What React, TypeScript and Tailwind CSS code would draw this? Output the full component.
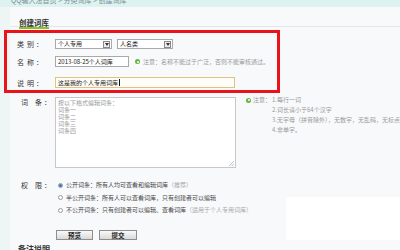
import React from 'react';

const font = { fontFamily: '"Noto Sans CJK SC", "Noto Sans", sans-serif' };

function Label({ a, b, wide }: { a: string; b: string; wide?: boolean }) {
  return (
    <div className={`flex items-center shrink-0 w-[45px] text-[7px] leading-[8px] text-[#333] ${wide ? 'pl-[11px]' : 'pl-[7px]'}`}>
      <span>{a}</span>
      <span className={wide ? 'ml-[7px]' : 'ml-[3px]'}>{b}</span>
      <span className="ml-[2px]">：</span>
    </div>
  );
}

function Select({ value, w }: { value: string; w: string }) {
  return (
    <div className={`${w} h-[10px] bg-white border border-[#a9a9a9] flex items-center justify-between pl-[2px] pr-[1px]`}>
      <span className="text-[6px] leading-[8px] text-[#222]">{value}</span>
      <span className="w-[7px] h-[7px] border border-[#888] bg-[#eee] flex items-center justify-center">
        <svg width="4" height="3" viewBox="0 0 4 3"><path d="M0 0h4L2 3z" fill="#333" /></svg>
      </span>
    </div>
  );
}

function Tip() {
  return (
    <span className="w-[5px] h-[5px] rounded-full bg-[#67b346] flex items-center justify-center shrink-0">
      <span className="w-[2px] h-[2px] rounded-full bg-white" />
    </span>
  );
}

function Radio({ checked, title, desc, extra }: { checked?: boolean; title: string; desc: string; extra?: string }) {
  return (
    <div className="flex items-center h-[12.5px] text-[6px] leading-[8px]">
      <span className="w-[5px] h-[5px] rounded-full border border-[#999] bg-white flex items-center justify-center shrink-0 ml-[1px]">
        {checked && <span className="w-[3px] h-[3px] rounded-full bg-[#2f6fd0]" />}
      </span>
      <span className="ml-[3px] text-[#444] whitespace-nowrap">
        {title}：{desc}
        {extra && <span className="text-[#aaa]">（{extra}）</span>}
      </span>
    </div>
  );
}

export default function App() {
  return (
    <div style={font} className="relative w-[400px] h-[250px] overflow-hidden bg-white">
      {/* breadcrumb band */}
      <div className="h-[7px] bg-[#dcf3f0] overflow-hidden pl-[11px]">
        <div className="-mt-[4px] text-[7px] leading-[8px] text-[#7d8f9a] whitespace-nowrap">
          QQ输入法首页 &gt; 分类词库 &gt; 创建词库
        </div>
      </div>

      <div className="flex h-[243px]">
        <div className="w-[10px] bg-[#eef5f5] shrink-0" />
        <div className="flex-1 flex flex-col bg-[#f8f9fb]">
          {/* tab header */}
          <div className="h-[20px] border-b border-[#e5e8ea] pl-[9px] shrink-0">
            <div className="mt-[9px] inline-block border-b-2 border-[#8fc31f] text-[7.5px] leading-[8px] font-bold text-[#333]">
              创建词库
            </div>
          </div>

          {/* form */}
          <div className="pt-[12px] flex flex-col">
            <div className="flex items-center h-[10px]">
              <Label a="类" b="别" />
              <Select value="个人专用" w="w-[57px]" />
              <div className="ml-[5px]">
                <Select value="人名类" w="w-[56px]" />
              </div>
            </div>

            <div className="flex items-center h-[11px] mt-[7px]">
              <Label a="名" b="称" />
              <div className="w-[74px] h-[11px] bg-white border border-[#a9a9a9] flex items-center px-[2px] text-[6px] leading-[8px] text-[#222] whitespace-nowrap">
                2013-08-25个人词库
              </div>
              <div className="ml-[6px] flex items-center">
                <Tip />
                <span className="ml-[3px] text-[6px] leading-[8px] text-[#9a9a9a] whitespace-nowrap">
                  注意：名称不能过于广泛，否则不能审核通过。
                </span>
              </div>
            </div>

            <div className="flex items-center h-[11px] mt-[10px]">
              <Label a="说" b="明" />
              <div className="w-[180px] h-[11px] bg-[#fffdf8] border border-[#e3c27e] flex items-center px-[2px] text-[6px] leading-[8px] text-[#222] whitespace-nowrap">
                这是我的个人专用词库
                <span className="w-px h-[7px] bg-[#111] ml-px" />
              </div>
            </div>

            <div className="flex mt-[9px]">
              <div className="mt-px">
                <Label a="词" b="条" wide />
              </div>
              <div className="w-[181px] h-[71px] bg-white border border-[#c8c8c8] px-[2px] pt-[1px] text-[6px] leading-[7px] text-[#999] relative">
                <div>按以下格式编辑词条：</div>
                <div>词条一</div>
                <div>词条二</div>
                <div>词条三</div>
                <div>词条四</div>
                <svg className="absolute right-[1px] bottom-[1px]" width="5" height="5" viewBox="0 0 5 5">
                  <path d="M5 0L0 5M5 2.5L2.5 5" stroke="#999" strokeWidth="0.6" />
                </svg>
              </div>
              <div className="ml-[10px] -mt-[2px] flex text-[6px] leading-[10px] text-[#9a9a9a] whitespace-nowrap">
                <div className="flex items-center h-[10px]">
                  <Tip />
                  <span className="ml-[2px]">注意：</span>
                </div>
                <div className="ml-[1px]">
                  <div>1.每行一词</div>
                  <div>2.词长请小于64个汉字</div>
                  <div>3.无字母（拼音除外），无数字，无乱码，无标点</div>
                  <div>4.非单字。</div>
                </div>
              </div>
            </div>

            {/* permission + actions */}
            <div className="flex mt-[11px]">
              <div className="flex-1 flex">
                <div className="h-[12.5px] flex items-center">
                  <Label a="权" b="限" wide />
                </div>
                <div className="ml-[2px] flex flex-col">
                  <Radio checked title="公开词条" desc="所有人均可查看和编辑词库" extra="推荐" />
                  <Radio title="半公开词条" desc="所有人可以查看词库，只有创建者可以编辑" />
                  <Radio title="不公开词条" desc="只有创建者可以编辑、查看词库" extra="适用于个人专用词库" />
                  <div className="flex gap-[6px] mt-[13px] -ml-[1px]">
                    <button className="w-[37px] h-[10px] border border-[#8e8e8e] bg-gradient-to-b from-[#fafafa] to-[#d9d9d9] text-[6.5px] leading-[8px] font-bold text-[#222]">
                      预览
                    </button>
                    <button className="w-[38px] h-[10px] border border-[#8e8e8e] bg-gradient-to-b from-[#fafafa] to-[#d9d9d9] text-[6.5px] leading-[8px] font-bold text-[#222]">
                      提交
                    </button>
                  </div>
                </div>
              </div>
              <div className="w-[114px] shrink-0 flex flex-col">
                <div className="h-[18px]" />
                <div className="flex-1 bg-white" />
              </div>
            </div>
            <div className="pl-[8px] mt-[4px] text-[8px] leading-[9px] font-bold text-[#333]">备注说明</div>
          </div>
        </div>
      </div>

      {/* red annotation frame */}
      <div className="absolute left-[4px] top-[30px] w-[276px] h-[63px] border-[3px] border-[#e8141a]" />
    </div>
  );
}
